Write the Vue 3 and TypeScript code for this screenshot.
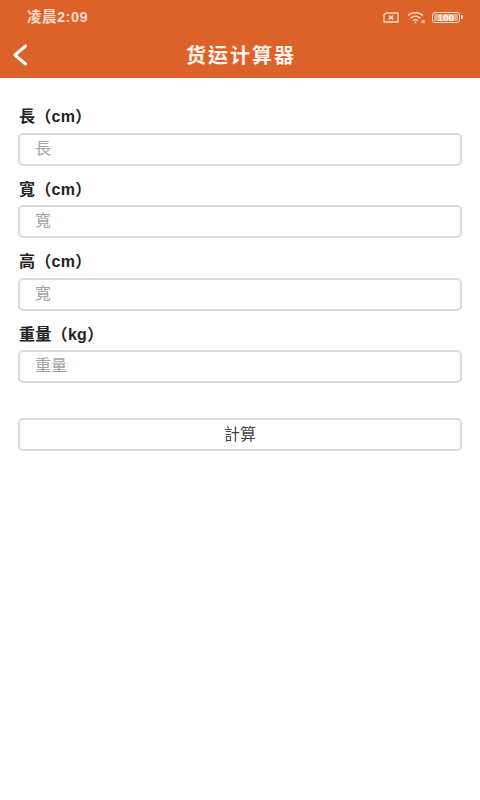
<script setup lang="ts">
const fields = [
  { label: '長（cm）', placeholder: '長' },
  { label: '寬（cm）', placeholder: '寬' },
  { label: '高（cm）', placeholder: '寬' },
  { label: '重量（kg）', placeholder: '重量' },
]
</script>

<template>
  <div class="page">
    <header class="head">
      <div class="status">
        <span class="time">凌晨2:09</span>
        <div class="sys">
          <svg width="16" height="11" viewBox="0 0 16 11" fill="none" stroke="#fbdccb" stroke-width="1.3">
            <path d="M3 1H15V10H1V3Z" stroke-linejoin="round" />
            <path d="M5.8 3.6 10.2 7.4M10.2 3.6 5.8 7.4" stroke-width="1.6" />
          </svg>
          <svg class="wifi" width="18" height="13" viewBox="0 0 18 13" fill="none" stroke="#fbdccb" stroke-width="1.4">
            <path d="M1 4.6C5.2.6 11.8.6 16 4.6" />
            <path d="M3.6 7.2C6.4 4.6 10.6 4.6 13.4 7.2" />
            <path d="M6.2 9.6C7.6 8.4 9.4 8.4 10.8 9.6" />
            <circle cx="8.5" cy="11.4" r=".9" fill="#fbdccb" stroke="none" />
            <rect x="14.6" y="9" width="3.2" height="3.2" fill="#f3b796" stroke="none" />
          </svg>
          <div class="battery">
            <div class="cell"><span>100</span></div>
            <i></i>
          </div>
        </div>
      </div>
      <div class="bar">
        <svg class="back" width="16" height="22" viewBox="0 0 16 22" fill="none" stroke="#fff" stroke-width="3" stroke-linecap="round" stroke-linejoin="round">
          <path d="M13.5 2 3 11l10.5 9" />
        </svg>
        <h1>货运计算器</h1>
      </div>
    </header>
    <main class="form">
      <div v-for="f in fields" :key="f.label" class="field">
        <label>{{ f.label }}</label>
        <input :placeholder="f.placeholder" />
      </div>
      <button type="button">計算</button>
    </main>
  </div>
</template>

<style>
html, body { margin: 0; background: #fff; }
</style>

<style scoped>
.page {
  width: 480px;
  height: 800px;
  overflow: hidden;
  background: #fff;
  font-family: "Liberation Sans", "Noto Sans CJK TC", "Noto Sans CJK SC", sans-serif;
}
.head {
  height: 78px;
  background: #dc6229;
  box-sizing: border-box;
  padding-top: 6px;
}
.status {
  height: 22px;
  display: flex;
  align-items: center;
  justify-content: space-between;
  padding: 0 17px 0 27px;
}
.time {
  margin-top: -3px;
  font-size: 14.5px;
  font-weight: 700;
  color: #fbdccb;
  letter-spacing: 0.5px;
}
.sys {
  display: flex;
  align-items: center;
  gap: 8px;
}
.wifi { margin-right: -1px; }
.battery {
  display: flex;
  align-items: center;
  gap: 1px;
}
.cell {
  width: 28px;
  height: 11px;
  box-sizing: border-box;
  border: 1.2px solid #fbdccb;
  border-radius: 3px;
  padding: 1px;
  display: flex;
}
.cell span {
  flex: 1;
  background: #eda987;
  border-radius: 1px;
  color: #fff;
  font-size: 9.5px;
  font-weight: 700;
  line-height: 7px;
  text-align: center;
  letter-spacing: 0.3px;
}
.battery i {
  width: 2px;
  height: 4px;
  background: #fbdccb;
  border-radius: 0 1px 1px 0;
}
.bar {
  position: relative;
  height: 50px;
  display: flex;
  align-items: center;
  justify-content: center;
}
.back {
  position: absolute;
  left: 12px;
  top: 16px;
}
h1 {
  margin: 2px 0 0;
  font-size: 20px;
  font-weight: 700;
  color: #fdf3ec;
  letter-spacing: 2px;
  text-indent: 2px;
}
.form {
  padding: 29px 18px 0;
  display: flex;
  flex-direction: column;
}
.field {
  display: flex;
  flex-direction: column;
  gap: 5.5px;
  margin-bottom: 14px;
}
label {
  height: 20px;
  line-height: 20px;
  font-size: 16px;
  font-weight: 700;
  color: #222;
  padding-left: 1px;
  letter-spacing: 0.3px;
}
input, button {
  width: 444px;
  height: 33px;
  box-sizing: border-box;
  border: 2px solid #dadada;
  border-radius: 5px;
  background: #fff;
  font-family: inherit;
  font-size: 16px;
  outline: none;
}
input {
  padding: 0 15px 1px;
  color: #333;
}
input::placeholder { color: #a3a3a3; }
button {
  margin-top: 20.5px;
  color: #444;
  padding: 0 0 2px;
}
</style>
